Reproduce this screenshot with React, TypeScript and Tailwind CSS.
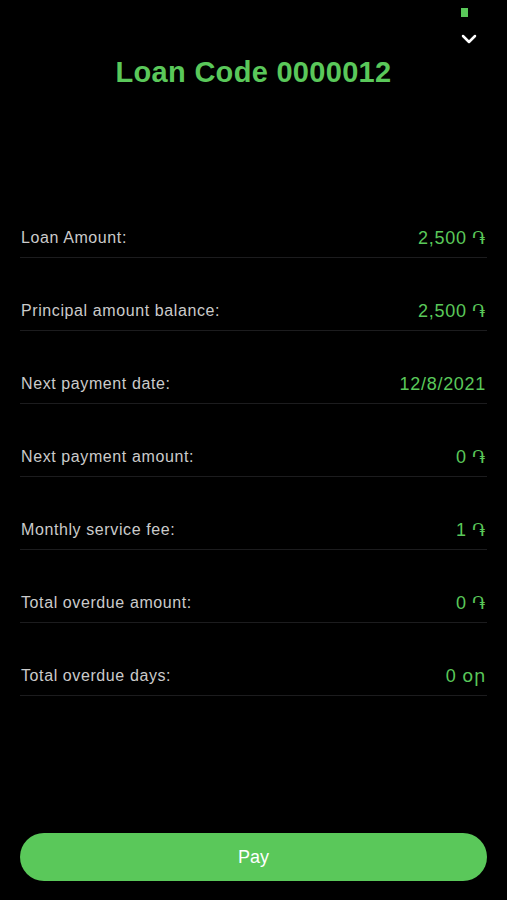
import { ChevronDown } from 'lucide-react'

const rows = [
  { label: 'Loan Amount:', value: '2,500 ֏' },
  { label: 'Principal amount balance:', value: '2,500 ֏' },
  { label: 'Next payment date:', value: '12/8/2021' },
  { label: 'Next payment amount:', value: '0 ֏' },
  { label: 'Monthly service fee:', value: '1 ֏' },
  { label: 'Total overdue amount:', value: '0 ֏' },
  { label: 'Total overdue days:', value: '0 օր' },
]

export default function App() {
  return (
    <div
      className="w-[507px] h-[900px] bg-black flex flex-col"
      style={{ fontFamily: '"Liberation Sans", "DejaVu Sans", sans-serif' }}
    >
      <div className="relative h-[185px]">
        <div className="absolute right-[39px] top-[8px] w-[7px] h-[9px] bg-[#5ac85a]" />
        <ChevronDown className="absolute right-[26px] top-[27px] text-white" size={24} strokeWidth={2.5} />
        <h1 className="pt-[56px] text-center text-[29px] font-bold text-[#5ac85a] leading-[32px] tracking-[0.3px]">
          Loan Code 0000012
        </h1>
      </div>

      <div className="px-[20px]">
        {rows.map((row) => (
          <div
            key={row.label}
            className="h-[73px] flex items-end justify-between pb-[9px] border-b border-[#1c1c1e]"
          >
            <span className="text-[16px] leading-[20px] text-[#cbcbcb] pl-[1px] tracking-[0.6px]">{row.label}</span>
            <span className="text-[18px] leading-[20px] text-[#5ac85a] pr-[1px] tracking-[0.7px]">
              {row.value}
            </span>
          </div>
        ))}
      </div>

      <div className="flex-1" />

      <div className="px-[20px] pb-[19px]">
        <button className="w-full h-[48px] rounded-full bg-[#5ac85a] text-white text-[18px]">
          Pay
        </button>
      </div>
    </div>
  )
}
